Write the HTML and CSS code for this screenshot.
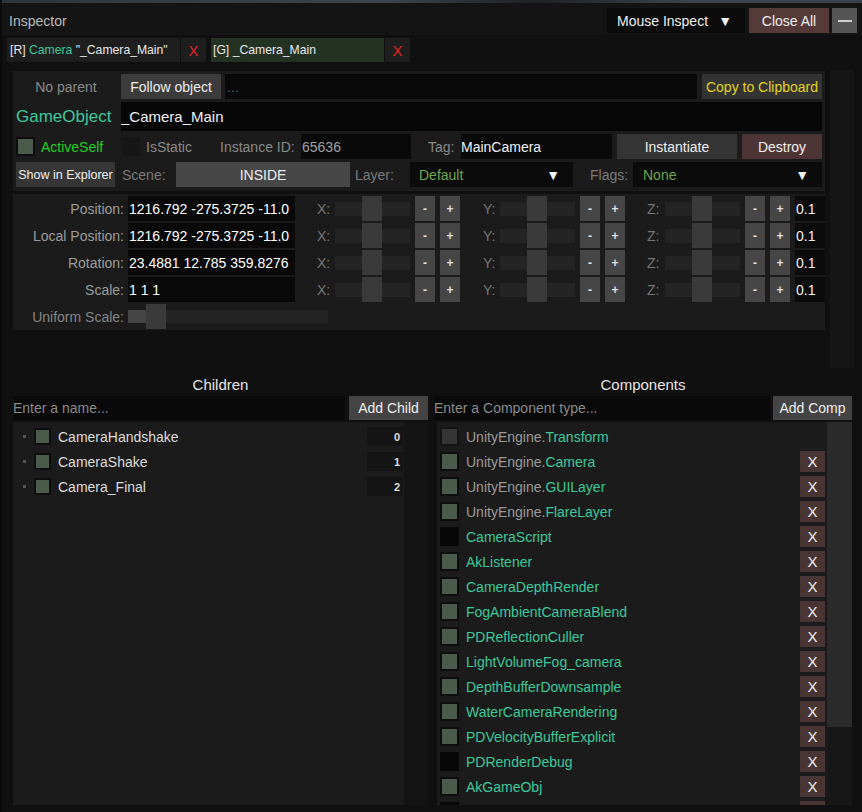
FILE: index.html
```html
<!DOCTYPE html>
<html>
<head>
<meta charset="utf-8">
<title>Inspector</title>
<link rel="stylesheet" href="styles.css">
</head>
<body>
<div class="win">
  <div class="topstrip"></div>
  <div class="titlebar">
    <div class="title">Inspector</div>
    <div class="dd mouse"><span>Mouse Inspect</span><span class="tri">▼</span></div>
    <div class="btn closeall">Close All</div>
    <div class="btn minbtn"><span class="minline"></span></div>
  </div>
  <div class="tabs">
    <div class="tab">[R] <span class="g">Camera</span> "_Camera_Main"</div>
    <div class="tabx">X</div>
    <div class="tab active">[G] _Camera_Main</div>
    <div class="tabx">X</div>
  </div>

  <div class="upper">
    <div class="gocol">
      <div class="panel pa">
        <div class="row">
          <div class="plabel">No parent</div>
          <div class="btn follow">Follow object</div>
          <div class="input grow dots">...</div>
          <div class="btn copy">Copy to Clipboard</div>
        </div>
        <div class="row r2">
          <div class="golabel">GameObject</div>
          <div class="input grow goname">_Camera_Main</div>
        </div>
        <div class="row">
          <div class="cell act"><span class="cb"></span><span class="green">ActiveSelf</span></div>
          <div class="cell stat"><span class="cb dim"></span><span class="muted">IsStatic</span></div>
          <div class="cell idlabel muted">Instance ID:</div>
          <div class="input idval">65636</div>
          <div class="cell taglabel muted">Tag:</div>
          <div class="input tagval">MainCamera</div>
          <div class="btn inst">Instantiate</div>
          <div class="btn destroy">Destroy</div>
        </div>
        <div class="row">
          <div class="btn explorer">Show in Explorer</div>
          <div class="cell scenelabel faint">Scene:</div>
          <div class="btn inside">INSIDE</div>
          <div class="cell layerlabel faint">Layer:</div>
          <div class="dd layerdd"><span class="olive">Default</span><span class="tri">▼</span></div>
          <div class="cell flagslabel faint">Flags:</div>
          <div class="dd flagsdd"><span class="olive">None</span><span class="tri">▼</span></div>
        </div>
      </div>

      <div class="panel pb">
        <div class="row">
          <div class="tlabel">Position:</div>
          <div class="tval">1216.792 -275.3725 -11.0</div>
          <div class="axis">X:</div><div class="slider"><span class="thumb"></span></div>
          <div class="pm">-</div><div class="pm">+</div>
          <div class="axis ay">Y:</div><div class="slider"><span class="thumb"></span></div>
          <div class="pm">-</div><div class="pm">+</div>
          <div class="axis az">Z:</div><div class="slider"><span class="thumb"></span></div>
          <div class="pm">-</div><div class="pm">+</div>
          <div class="step">0.1</div>
        </div>
        <div class="row">
          <div class="tlabel">Local Position:</div>
          <div class="tval">1216.792 -275.3725 -11.0</div>
          <div class="axis">X:</div><div class="slider"><span class="thumb"></span></div>
          <div class="pm">-</div><div class="pm">+</div>
          <div class="axis ay">Y:</div><div class="slider"><span class="thumb"></span></div>
          <div class="pm">-</div><div class="pm">+</div>
          <div class="axis az">Z:</div><div class="slider"><span class="thumb"></span></div>
          <div class="pm">-</div><div class="pm">+</div>
          <div class="step">0.1</div>
        </div>
        <div class="row">
          <div class="tlabel">Rotation:</div>
          <div class="tval">23.4881 12.785 359.8276</div>
          <div class="axis">X:</div><div class="slider"><span class="thumb"></span></div>
          <div class="pm">-</div><div class="pm">+</div>
          <div class="axis ay">Y:</div><div class="slider"><span class="thumb"></span></div>
          <div class="pm">-</div><div class="pm">+</div>
          <div class="axis az">Z:</div><div class="slider"><span class="thumb"></span></div>
          <div class="pm">-</div><div class="pm">+</div>
          <div class="step">0.1</div>
        </div>
        <div class="row">
          <div class="tlabel">Scale:</div>
          <div class="tval">1 1 1</div>
          <div class="axis">X:</div><div class="slider"><span class="thumb"></span></div>
          <div class="pm">-</div><div class="pm">+</div>
          <div class="axis ay">Y:</div><div class="slider"><span class="thumb"></span></div>
          <div class="pm">-</div><div class="pm">+</div>
          <div class="axis az">Z:</div><div class="slider"><span class="thumb"></span></div>
          <div class="pm">-</div><div class="pm">+</div>
          <div class="step">0.1</div>
        </div>
        <div class="row">
          <div class="tlabel ulabel">Uniform Scale:</div>
          <div class="uslider"><span class="fill"></span><span class="thumb"></span></div>
        </div>
      </div>
    </div>
    <div class="vscroll"></div>
  </div>

  <div class="lower">
    <div class="ccol">
      <div class="hdr">Children</div>
      <div class="addrow">
        <div class="input ph">Enter a name...</div>
        <div class="btn addbtn">Add Child</div>
      </div>
      <div class="list">
        <div class="clist">
          <div class="crow"><span class="bullet"></span><span class="cb sm"></span><span class="cname">CameraHandshake</span><span class="idx">0</span></div>
          <div class="crow"><span class="bullet"></span><span class="cb sm"></span><span class="cname">CameraShake</span><span class="idx">1</span></div>
          <div class="crow"><span class="bullet"></span><span class="cb sm"></span><span class="cname">Camera_Final</span><span class="idx">2</span></div>
        </div>
        <div class="cgutter"></div>
      </div>
    </div>

    <div class="kcol">
      <div class="hdr">Components</div>
      <div class="addrow kadd">
        <div class="input ph">Enter a Component type...</div>
        <div class="btn addbtn">Add Comp</div>
      </div>
      <div class="list klistwrap">
        <div class="klist">
          <div class="krow"><span class="cb gray"></span><span class="ns">UnityEngine.</span><span class="g">Transform</span></div>
          <div class="krow"><span class="cb"></span><span class="ns">UnityEngine.</span><span class="g">Camera</span><span class="kx">X</span></div>
          <div class="krow"><span class="cb"></span><span class="ns">UnityEngine.</span><span class="g">GUILayer</span><span class="kx">X</span></div>
          <div class="krow"><span class="cb"></span><span class="ns">UnityEngine.</span><span class="g">FlareLayer</span><span class="kx">X</span></div>
          <div class="krow"><span class="cb black"></span><span class="g">CameraScript</span><span class="kx">X</span></div>
          <div class="krow"><span class="cb"></span><span class="g">AkListener</span><span class="kx">X</span></div>
          <div class="krow"><span class="cb"></span><span class="g">CameraDepthRender</span><span class="kx">X</span></div>
          <div class="krow"><span class="cb"></span><span class="g">FogAmbientCameraBlend</span><span class="kx">X</span></div>
          <div class="krow"><span class="cb"></span><span class="g">PDReflectionCuller</span><span class="kx">X</span></div>
          <div class="krow"><span class="cb"></span><span class="g">LightVolumeFog_camera</span><span class="kx">X</span></div>
          <div class="krow"><span class="cb"></span><span class="g">DepthBufferDownsample</span><span class="kx">X</span></div>
          <div class="krow"><span class="cb"></span><span class="g">WaterCameraRendering</span><span class="kx">X</span></div>
          <div class="krow"><span class="cb"></span><span class="g">PDVelocityBufferExplicit</span><span class="kx">X</span></div>
          <div class="krow"><span class="cb black"></span><span class="g">PDRenderDebug</span><span class="kx">X</span></div>
          <div class="krow"><span class="cb"></span><span class="g">AkGameObj</span><span class="kx">X</span></div>
          <div class="krow"><span class="cb black"></span><span class="kx"></span></div>
        </div>
        <div class="kscroll"><div class="kthumb"></div></div>
      </div>
    </div>
  </div>
</div>
</body>
</html>
```

FILE: styles.css
```css
* { box-sizing: border-box; margin: 0; padding: 0; }
html, body { width: 862px; height: 812px; overflow: hidden; background: #101010; }
body { font-family: "Liberation Sans", Arial, sans-serif; font-size: 14px; color: #e8e8e8; }

.win { width: 862px; height: 812px; border-left: 2px solid #0a0a0a; }

.topstrip { height: 3px; background: linear-gradient(90deg, #2e363d 0%, #3b454d 45%, #1c2125 62%, #2a3137 70%, #3b454d 80%, #39424a 100%); }

.titlebar { height: 32px; padding: 3px 5px 0 7px; display: flex; align-items: center; background: #141414; }
.title { color: #bdbdbd; flex: 1; }

.btn { display: flex; align-items: center; justify-content: center; color: #eeeeee; height: 25px; white-space: nowrap; }
.dd { display: flex; align-items: center; justify-content: space-between; background: #0b0b0b; height: 25px; }
.tri { font-size: 14px; line-height: 1; color: #f2f2f2; }

.mouse { width: 138px; padding: 0 13px 0 10px; color: #eeeeee; }
.closeall { width: 80px; background: #563a3a; margin-left: 4px; }
.minbtn { width: 25px; background: #555555; margin-left: 3px; }
.minline { display: block; width: 14px; height: 2px; background: #cfcfcf; }

.tabs { height: 30px; padding: 3px 0 0 5px; display: flex; background: #101010; }
.tab { width: 173px; height: 24px; background: #1e1e1e; display: flex; align-items: center; padding-left: 3px; white-space: pre; font-size: 12.2px; color: #e8e8e8; }
.tab.active { background: #243224; margin-left: 5px; padding-left: 2px; }
.tabx { width: 25px; height: 24px; margin-left: 1px; background: #1e1e1e; color: #e02424; display: flex; align-items: center; justify-content: center; font-size: 15px; }

.g { color: #3cc99a; }
.green { color: #22d022; }
.muted { color: #8a8a8a; }
.faint { color: #7a7a7a; }
.olive { color: #6fa44f; }

.upper { height: 305px; display: flex; padding-left: 11px; }
.gocol { width: 812px; padding-top: 6px; display: flex; flex-direction: column; gap: 3px; }
.vscroll { width: 24px; height: 298px; margin: 5px 0 0 5px; background: #161616; }

.panel { background: #1b1b1b; }
.pa { height: 120px; padding: 3px 3px 0 3px; display: flex; flex-direction: column; gap: 3px; }
.pb { height: 136px; padding-top: 2px; display: flex; flex-direction: column; gap: 2px; }

.row { display: flex; align-items: center; height: 25px; flex: none; }
.row.r2 { height: 29px; }

.input { background: #090909; height: 25px; display: flex; align-items: center; white-space: nowrap; overflow: hidden; }
.grow { flex: 1; }

.plabel { width: 100px; text-align: center; color: #8a8a8a; }
.follow { width: 100px; margin-left: 5px; background: #3c3c3c; }
.dots { margin-left: 4px; padding-left: 2px; color: #5a5a5a; }
.copy { width: 120px; margin-left: 5px; background: #333333; color: #e4d21c; }

.golabel { width: 105px; font-size: 17px; color: #3cc99a; }
.goname { height: 29px; background: #070707; font-size: 15px; color: #f0f0f0; padding-left: 0; }

.cell { display: flex; align-items: center; height: 25px; white-space: nowrap; }
.cb { display: inline-block; width: 19px; height: 19px; background: #4b5b4b; border: 2px solid #0d0d0d; flex: none; }
.cb.dim { background: #161616; border-color: #161616; }
.cb.gray { background: #353535; border-color: #141414; }
.cb.black { background: #080808; border-color: #080808; }
.act { width: 105px; }
.act .cb { margin-right: 6px; }
.stat { width: 99px; }
.stat .cb { margin-right: 6px; }
.idlabel { width: 81px; }
.idval { width: 110px; padding-left: 1px; color: #a0a0a0; }
.taglabel { width: 50px; padding-left: 17px; }
.tagval { width: 151px; color: #f0f0f0; }
.inst { width: 120px; margin-left: 5px; background: #343434; }
.destroy { width: 80px; margin-left: 5px; background: #4e3535; }

.explorer { width: 99px; background: #363636; font-size: 12.5px; }
.scenelabel { width: 61px; padding-left: 7px; }
.inside { width: 174px; background: #474747; }
.layerlabel { width: 60px; padding-left: 5px; }
.layerdd { width: 163px; padding: 0 13px 0 9px; }
.flagslabel { width: 60px; padding-left: 17px; }
.flagsdd { width: 189px; padding: 0 13px 0 10px; }

.tlabel { width: 111px; text-align: right; color: #9c9c9c; white-space: nowrap; }
.ulabel { color: #858585; }
.tval { width: 167px; height: 25px; margin-left: 4px; background: #090909; color: #ffffff; display: flex; align-items: center; padding-left: 1px; white-space: nowrap; }
.axis { width: 40px; padding-left: 22px; color: #777777; }
.axis.ay { padding-left: 23px; }
.slider { width: 75px; height: 25px; display: flex; padding-left: 27px; background: linear-gradient(#242424, #242424) center / 100% 14px no-repeat; }
.thumb { display: block; width: 20px; height: 25px; background: #3a3a3a; flex: none; }
.pm { width: 20px; height: 25px; margin-left: 5px; background: #464646; color: #e0e0e0; display: flex; align-items: center; justify-content: center; font-size: 12px; font-weight: bold; }
.step { width: 30px; height: 25px; margin-left: 5px; background: #0b0b0b; color: #f2f2f2; display: flex; align-items: center; padding-left: 1px; }

.uslider { width: 200px; height: 25px; margin-left: 4px; display: flex; align-items: center; background: linear-gradient(#242424, #242424) center / 100% 13px no-repeat; }
.fill { display: block; width: 18px; height: 13px; background: #454545; }

.lower { display: flex; padding-left: 11px; height: 435px; }
.ccol { width: 415px; display: flex; flex-direction: column; }
.kcol { width: 418px; margin-left: 6px; display: flex; flex-direction: column; }
.hdr { height: 26px; padding-top: 3px; display: flex; align-items: center; justify-content: center; font-size: 15px; color: #e6e6e6; flex: none; }
.addrow { display: flex; height: 24px; gap: 4px; flex: none; }
.addrow.kadd { gap: 3px; }
.addrow .input { flex: 1; height: 24px; color: #8a8a8a; }
.ph { padding-left: 0; }
.addbtn { width: 79px; height: 24px; background: #444444; }

.list { flex: 1; margin-top: 2px; display: flex; overflow: hidden; }
.clist { width: 391px; background: #1b1b1b; padding-top: 2px; }
.cgutter { width: 24px; background: #141414; }
.crow { height: 25px; display: flex; align-items: center; padding: 0 1px 0 10px; }
.bullet { display: block; width: 3px; height: 3px; background: #555555; margin-right: 8px; }
.cb.sm { width: 17px; height: 17px; }
.cname { margin-left: 7px; color: #dcdcdc; }
.idx { margin-left: auto; width: 36px; height: 19px; background: #141414; color: #dddddd; font-size: 11px; font-weight: bold; display: flex; align-items: center; justify-content: flex-end; padding-right: 3px; }

.klistwrap { margin-left: 3px; }
.klist { width: 390px; background: #1b1b1b; padding-top: 2px; overflow: hidden; }
.krow { height: 25px; display: flex; align-items: center; padding: 0 2px 0 3px; white-space: nowrap; }
.krow .cb { margin-right: 7px; }
.ns { color: #9a9a9a; }
.kx { margin-left: auto; width: 25px; height: 21px; background: #4a3535; color: #eeeeee; display: flex; align-items: center; justify-content: center; font-size: 15px; }
.kscroll { width: 25px; background: #171717; }
.kthumb { height: 305px; background: #2b2b2b; }
```
